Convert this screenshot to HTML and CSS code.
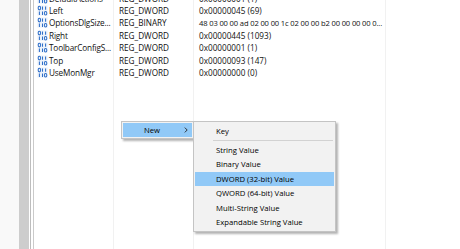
FILE: index.html
```html
<!DOCTYPE html>
<html><head>
<meta http-equiv="Content-Type" content="text/html; charset=utf-8">
<title>Registry Editor</title>
<link rel="stylesheet" href="styles.css"></head>

<body>
<div class="window">
	<div class="tree"></div>
	<div class="scrollbar"></div>
	<div class="splitter"></div>

	<div class="list">
		<div class="rows">
			<div class="row"><div class="name"><svg class="ico"><use href="#bin"/></svg>DefaultActions</div><div class="type">REG_DWORD</div><div class="data">0x00000001 (1)</div></div>
			<div class="row"><div class="name"><svg class="ico"><use href="#bin"/></svg>Left</div><div class="type">REG_DWORD</div><div class="data">0x00000045 (69)</div></div>
			<div class="row"><div class="name"><svg class="ico"><use href="#bin"/></svg>OptionsDlgSize...</div><div class="type">REG_BINARY</div><div class="data hex">48 03 00 00 ad 02 00 00 1c 02 00 00 b2 00 00 00 00 0...</div></div>
			<div class="row"><div class="name"><svg class="ico"><use href="#bin"/></svg>Right</div><div class="type">REG_DWORD</div><div class="data">0x00000445 (1093)</div></div>
			<div class="row"><div class="name"><svg class="ico"><use href="#bin"/></svg>ToolbarConfigS...</div><div class="type">REG_DWORD</div><div class="data">0x00000001 (1)</div></div>
			<div class="row"><div class="name"><svg class="ico"><use href="#bin"/></svg>Top</div><div class="type">REG_DWORD</div><div class="data">0x00000093 (147)</div></div>
			<div class="row"><div class="name"><svg class="ico"><use href="#bin"/></svg>UseMonMgr</div><div class="type">REG_DWORD</div><div class="data">0x00000000 (0)</div></div>
		</div>
	</div>
</div>

<!-- context menu -->
<div class="menu menuNew">
	<div class="item active">New
		<svg class="arrow" viewBox="0 0 4 6"><path d="M0.8 0.6 L3.2 3 L0.8 5.4" fill="none" stroke="#222" stroke-width="0.9"/></svg>
	</div>
</div>

<!-- "New" submenu -->
<div class="menu menuSub">
	<div class="item">Key</div>
	<div class="sep"></div>
	<div class="item">String Value</div>
	<div class="item">Binary Value</div>
	<div class="item active">DWORD (32-bit) Value</div>
	<div class="item">QWORD (64-bit) Value</div>
	<div class="item">Multi-String Value</div>
	<div class="item">Expandable String Value</div>
</div>

<!-- binary value icon -->
<svg width="0" height="0" class="defs">
	<symbol id="bin" viewBox="0 0 16 16">
		<rect x="0.5" y="0.5" width="15" height="15" fill="#eef3fa"/>
		<g fill="none" stroke="#2f6fc9" stroke-width="1.5">
			<ellipse cx="3.5" cy="4.5" rx="1.8" ry="2.6"/>
			<path d="M8 2 V7 M12.5 2 V7"/>
			<path d="M3.5 9.5 V14.5 M8 9.5 V14.5"/>
			<ellipse cx="12.5" cy="12" rx="1.8" ry="2.6"/>
		</g>
	</symbol>
</svg>
</body>
</html>
```

FILE: styles.css
```css
/* page: plain white, fixed window size */
body {
	margin: 0;
	background: #ffffff;
	font-family: "Open Sans", "Liberation Sans", sans-serif;
	width: 460px;
	height: 249px;
	overflow: hidden;
	position: relative;
}

.defs {
	position: absolute;
}

.window {
	display: flex;
	height: 249px;
}

/* left tree pane, mostly cut off */
.tree {
	width: 19px;
	background: #f9f9f9;
}
.scrollbar {
	width: 10px;
	background: #cdcdcd;
}
.splitter {
	width: 2px;
	margin-left: 1px;
	border-left: 1px solid #bdbdbd;
	border-right: 1px solid #cacaca;
}

/* values list with faint column lines */
.list {
	flex: 1;
	overflow: hidden;
	background:
		linear-gradient(#f1f1f1, #f1f1f1) 79px 0 / 1px 100% no-repeat,
		linear-gradient(#f1f1f1, #f1f1f1) 159px 0 / 1px 100% no-repeat,
		linear-gradient(#f1f1f1, #f1f1f1) 351px 0 / 1px 100% no-repeat;
}
.rows {
	margin-top: -8px;
}
.row {
	display: flex;
	align-items: center;
	height: 12.4px;
	font-size: 8.2px;
	color: #111;
	white-space: nowrap;
}
.name {
	width: 79px;
	display: flex;
	align-items: center;
	gap: 1px;
	padding-left: 3px;
	box-sizing: border-box;
	letter-spacing: -0.15px;
}
.ico {
	width: 11px;
	height: 11px;
	flex: none;
}
.type {
	width: 80px;
	padding-left: 6px;
	box-sizing: border-box;
}
.data {
	width: 192px;
	padding-left: 6px;
	box-sizing: border-box;
	overflow: hidden;
}
.hex {
	font-size: 7.6px;
	letter-spacing: -0.15px;
}

/* context menus */
.menu {
	position: absolute;
	background: #f2f2f2;
	border: 1px solid #c4c4c4;
	box-shadow: 2px 2px 2px rgba(0, 0, 0, 0.3);
	font-size: 7.7px;
	color: #000;
	box-sizing: border-box;
}
.menuNew {
	left: 121px;
	top: 121px;
	width: 73px;
	height: 18px;
	padding: 1px;
}
.menuSub {
	left: 193px;
	top: 121px;
	width: 143px;
	height: 111px;
	padding: 1.5px 1px;
}
.item {
	position: relative;
	height: 14.5px;
	line-height: 14.5px;
	padding-left: 21px;
	white-space: nowrap;
}
.menuNew .item {
	height: 14px;
	line-height: 14px;
}
.item.active {
	background: #91c9f7;
}
.arrow {
	position: absolute;
	right: 4px;
	top: 4px;
	width: 4px;
	height: 6px;
}
.sep {
	height: 4.8px;
	margin-left: 18px;
	margin-right: 1px;
	background: linear-gradient(#d2d2d2, #d2d2d2) 0 2px / 100% 1px no-repeat;
}
```
